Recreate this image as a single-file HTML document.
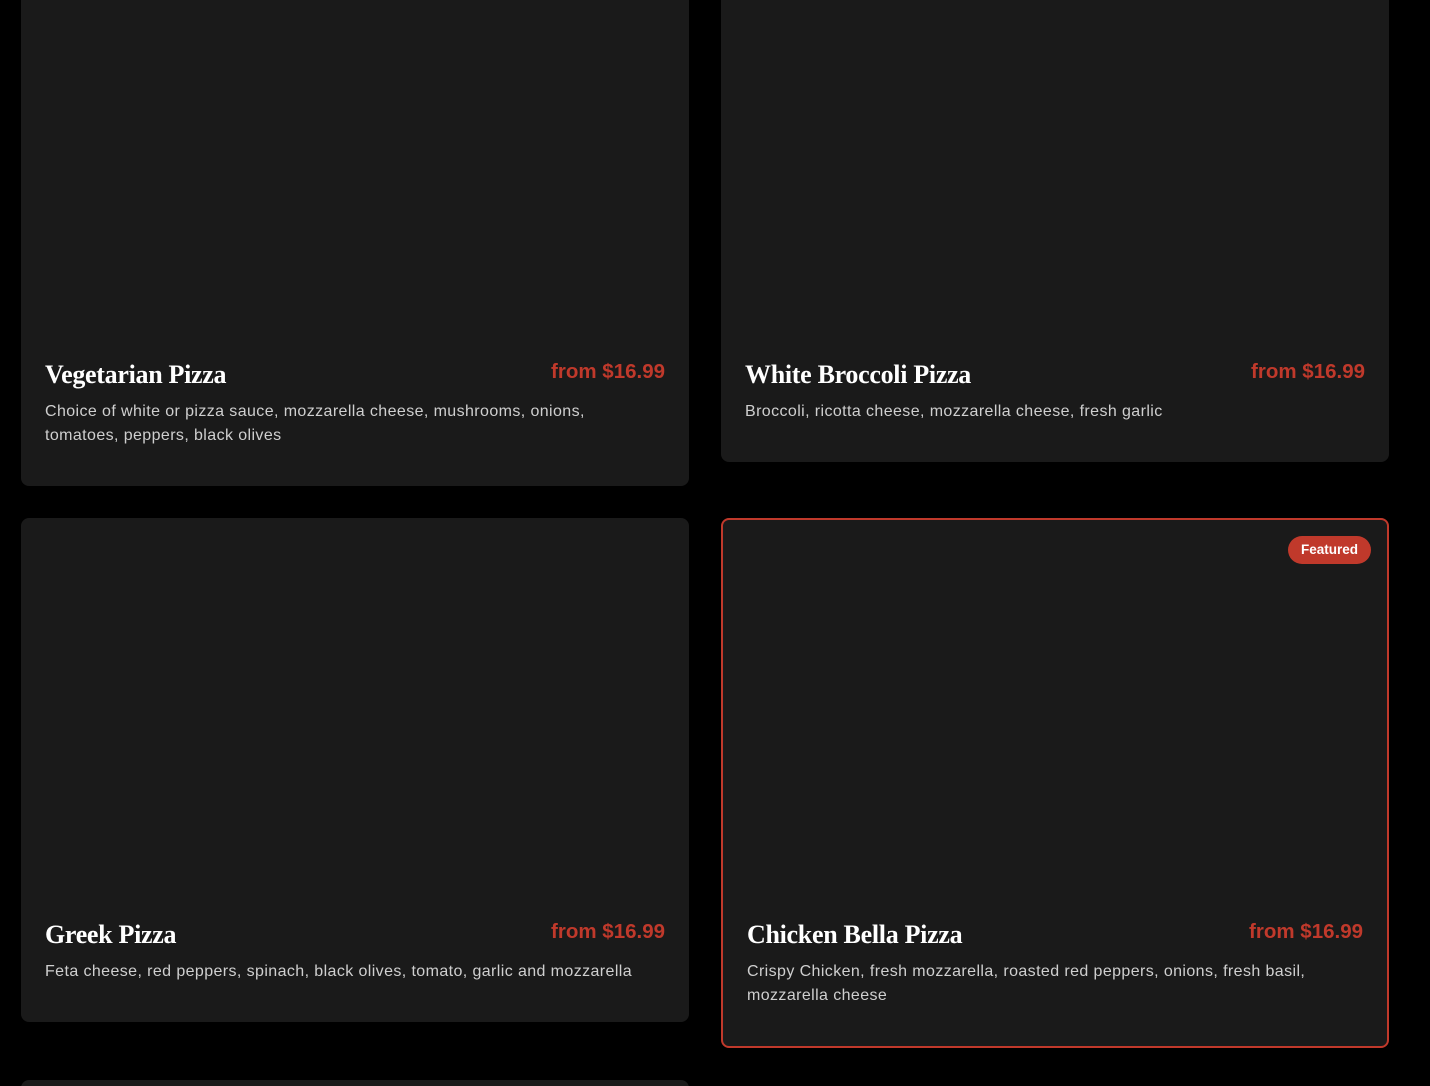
<!DOCTYPE html>
<html><head><meta charset="utf-8"><style>
*{margin:0;padding:0;box-sizing:border-box}
html,body{width:1430px;height:1086px;background:#000;overflow:hidden;position:relative;font-family:"Liberation Sans",sans-serif}
.card{position:absolute;background:#1a1a1a;border-radius:8px;width:668px}
.feat{border:2px solid #c0392b}
.t{position:absolute;font-family:"Liberation Serif",serif;font-weight:bold;font-size:26px;color:#fff;white-space:nowrap;letter-spacing:-0.3px}
.p{position:absolute;font-weight:bold;font-size:20.5px;color:#c0392b;white-space:nowrap;text-align:right;width:200px}
.d{position:absolute;font-size:16px;line-height:24px;color:#cfcfcf;width:600px;letter-spacing:0.4px}
.badge{position:absolute;background:#c0392b;color:#fff;font-size:13.5px;font-weight:bold;border-radius:14px;height:28px;line-height:28px;padding:0 12px;width:83px;text-align:center}
</style></head><body>
<div class="card" style="left:21px;top:-20px;height:506px"></div>
<div class="card" style="left:721px;top:-20px;height:482px"></div>
<div class="card" style="left:21px;top:518px;height:504px"></div>
<div class="card feat" style="left:721px;top:518px;height:530px"></div>
<div class="card" style="left:21px;top:1080px;height:40px"></div>

<div class="t" style="left:45px;top:360px">Vegetarian Pizza</div>
<div class="p" style="left:465px;top:360px">from $16.99</div>
<div class="d" style="left:45px;top:400px">Choice of white or pizza sauce, mozzarella cheese, mushrooms, onions, tomatoes, peppers, black olives</div>

<div class="t" style="left:745px;top:360px">White Broccoli Pizza</div>
<div class="p" style="left:1165px;top:360px">from $16.99</div>
<div class="d" style="left:745px;top:400px;width:640px">Broccoli, ricotta cheese, mozzarella cheese, fresh garlic</div>

<div class="t" style="left:45px;top:920px">Greek Pizza</div>
<div class="p" style="left:465px;top:920px">from $16.99</div>
<div class="d" style="left:45px;top:960px;width:640px">Feta cheese, red peppers, spinach, black olives, tomato, garlic and mozzarella</div>

<div class="badge" style="left:1288px;top:536px">Featured</div>
<div class="t" style="left:747px;top:920px">Chicken Bella Pizza</div>
<div class="p" style="left:1163px;top:920px">from $16.99</div>
<div class="d" style="left:747px;top:960px;width:600px">Crispy Chicken, fresh mozzarella, roasted red peppers, onions, fresh basil, mozzarella cheese</div>
</body></html>
